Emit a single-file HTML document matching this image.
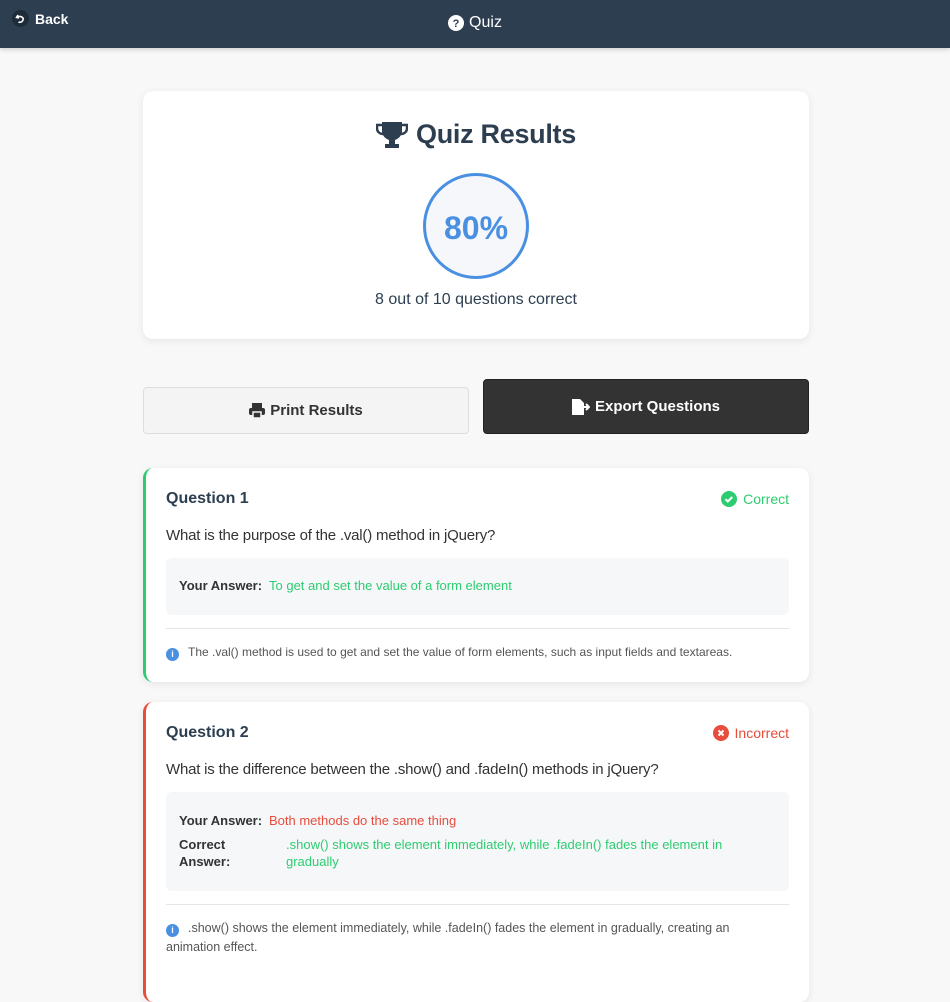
<!DOCTYPE html>
<html><head><meta charset="utf-8"><style>
*{box-sizing:border-box;margin:0;padding:0}
body{width:950px;height:958px;overflow:hidden;background:#f8f8f8;font-family:"Liberation Sans",Arial,sans-serif;color:#2c3e50}
.hdr{height:48px;background:#2d3e50;color:#fff;position:relative;box-shadow:0 2px 4px rgba(0,0,0,.15)}
.back{position:absolute;left:12px;top:10px;font-size:14px;font-weight:bold;display:flex;align-items:center;gap:6px}
.ttl{position:absolute;left:0;right:0;top:14px;text-align:center;font-size:16px;display:flex;justify-content:center;align-items:center;gap:5px}
.card{position:absolute;left:143px;width:666px;background:#fff;border-radius:10px;box-shadow:0 2px 8px rgba(0,0,0,.08)}
.res{top:91px;height:248px;text-align:center}
.res h1{font-size:27px;margin-top:28px;display:flex;justify-content:center;align-items:center;gap:8px;letter-spacing:-0.3px}
.circ{width:106px;height:106px;border:3px solid #4a90e2;border-radius:50%;margin:23px auto 0;background:#f5f7fa;color:#4a90e2;font-size:32px;font-weight:bold;line-height:104px}
.res p{font-size:16px;margin-top:12px;color:#2c3e50}
.btn{position:absolute;width:326px;border-radius:4px;font-size:15px;font-weight:bold;display:flex;justify-content:center;align-items:center;gap:5px}
.q{border-left:3px solid #2ecc71;padding:0 20px 0 20px}
.qh{display:flex;justify-content:space-between;align-items:center;margin-top:21px;height:20px}
.qh b{font-size:16px}
.st{font-size:14px;display:flex;align-items:center;gap:6px}
.qt{font-size:15px;margin-top:18px;color:#333;letter-spacing:-0.2px}
.box{background:#f6f7f9;border-radius:6px;margin-top:14px;padding:14px 13px;font-size:13px}
.row{display:flex}
.row b{color:#333;width:92px;flex:none}
.ex{border-top:1px solid #e6e6e6;margin-top:13px;padding-top:14px;font-size:12.5px;color:#555;line-height:19px;padding-right:40px}
.ic{display:inline-block;width:13px;height:13px;border-radius:50%;background:#4a90e2;color:#fff;font-size:9px;font-weight:bold;text-align:center;line-height:13px;margin-right:9px;vertical-align:-1px}
</style></head><body>
<div class="hdr">
<div class="back"><svg width="17" height="17" viewBox="0 0 17 17"><circle cx="8.5" cy="8.5" r="8.5" fill="#1e2b38"/><path d="M6 5 L4.5 7.5 L7 8 M5 7.3 C8 5.5 12 7 11 10 C10 12.5 7.5 12.5 6.5 12" stroke="#fff" stroke-width="1.6" fill="none"/></svg>Back</div>
<div class="ttl"><svg width="16" height="16" viewBox="0 0 16 16"><circle cx="8" cy="8" r="8" fill="#fff"/><text x="8" y="12" font-size="11" font-weight="bold" text-anchor="middle" fill="#2d3e50" font-family="Liberation Sans">?</text></svg>Quiz</div>
</div>
<div class="card res">
<h1><svg width="32" height="28" viewBox="0 0 32 28"><path d="M6 1h20v9c0 5-4 8-7 9v4h4v4H9v-4h4v-4c-3-1-7-4-7-9z" fill="#2c3e50"/><path d="M6 4H1v3c0 4 3 6 6 6M26 4h5v3c0 4-3 6-6 6" stroke="#2c3e50" stroke-width="2.5" fill="none"/></svg>Quiz Results</h1>
<div class="circ">80%</div>
<p>8 out of 10 questions correct</p>
</div>
<div class="btn" style="left:143px;top:387px;height:47px;background:#f4f4f4;border:1px solid #ddd;color:#333"><svg width="16" height="15" viewBox="0 0 16 15"><rect x="3" y="0" width="10" height="5" fill="#333"/><rect x="0" y="5" width="16" height="7" rx="2" fill="#333"/><rect x="4" y="9" width="8" height="6" fill="#333" stroke="#f4f4f4" stroke-width="1.5"/></svg>Print Results</div>
<div class="btn" style="left:483px;top:379px;height:55px;background:#333;color:#fff;border:1px solid #222"><svg width="18" height="16" viewBox="0 0 18 16"><path d="M0 0h8l4 4v12H0z" fill="#fff"/><path d="M9 8h7M14 5l3 3-3 3" stroke="#fff" stroke-width="2" fill="none"/></svg>Export Questions</div>
<div class="card q" style="top:468px;height:214px">
<div class="qh"><b>Question 1</b><span class="st" style="color:#2ecc71"><svg width="16" height="16" viewBox="0 0 16 16"><circle cx="8" cy="8" r="8" fill="#2ecc71"/><path d="M4.5 8.2l2.3 2.3 4.5-4.5" stroke="#fff" stroke-width="2" fill="none"/></svg>Correct</span></div>
<div class="qt">What is the purpose of the .val() method in jQuery?</div>
<div class="box" style="padding:20px 13px;height:57px"><div class="row"><b>Your Answer:</b><span style="color:#2ecc71;margin-left:-2px">To get and set the value of a form element</span></div></div>
<div class="ex" style="font-size:12px;padding-right:0;white-space:nowrap"><span class="ic">i</span>The .val() method is used to get and set the value of form elements, such as input fields and textareas.</div>
</div>
<div class="card q" style="top:702px;height:300px;border-left-color:#e74c3c">
<div class="qh"><b>Question 2</b><span class="st" style="color:#e74c3c"><svg width="16" height="16" viewBox="0 0 16 16"><circle cx="8" cy="8" r="8" fill="#e74c3c"/><path d="M5.5 5.5l5 5M10.5 5.5l-5 5" stroke="#fff" stroke-width="2"/></svg>Incorrect</span></div>
<div class="qt">What is the difference between the .show() and .fadeIn() methods in jQuery?</div>
<div class="box" style="padding:20px 13px 20px;height:99px;line-height:17px"><div class="row"><b>Your Answer:</b><span style="color:#e74c3c;margin-left:-2px">Both methods do the same thing</span></div>
<div class="row" style="margin-top:7px"><b style="width:107px">Correct<br>Answer:</b><span style="color:#2ecc71">.show() shows the element immediately, while .fadeIn() fades the element in gradually</span></div></div>
<div class="ex"><span class="ic">i</span>.show() shows the element immediately, while .fadeIn() fades the element in gradually, creating an animation effect.</div>
</div>
</body></html>
